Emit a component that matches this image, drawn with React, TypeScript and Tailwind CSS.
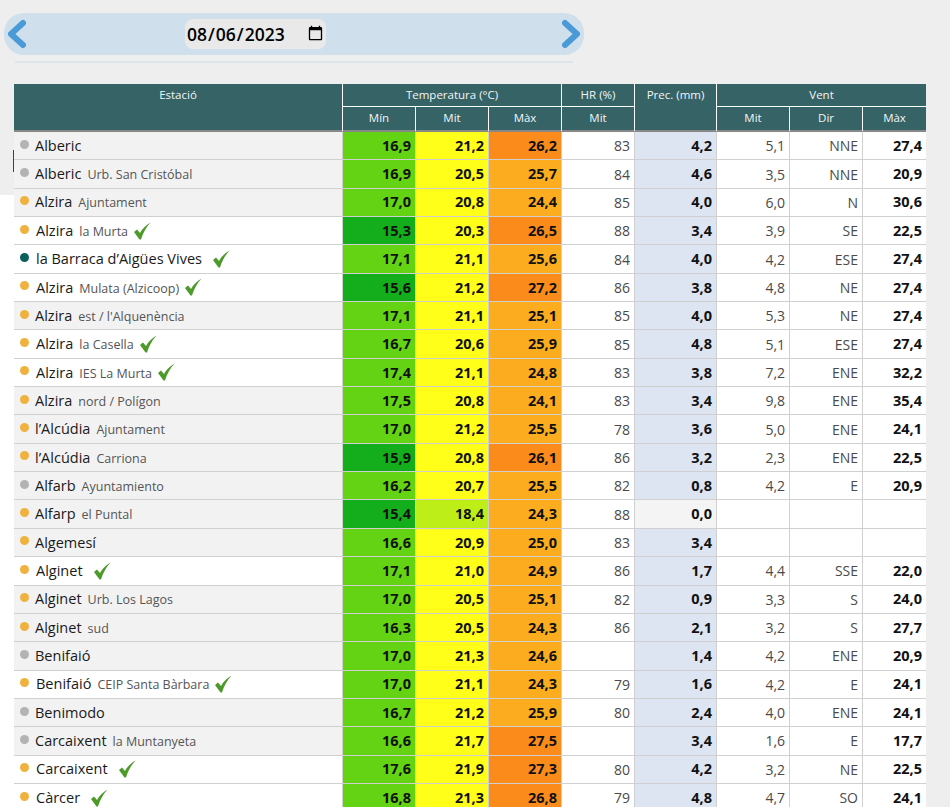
const rows: [string, string, string, boolean, string, string, string, string, string, string, string, string][] = [
  ["Alberic", "", "gray", false, "16,9", "21,2", "26,2", "83", "4,2", "5,1", "NNE", "27,4"],
  ["Alberic", "Urb. San Cristóbal", "gray", false, "16,9", "20,5", "25,7", "84", "4,6", "3,5", "NNE", "20,9"],
  ["Alzira", "Ajuntament", "orange", false, "17,0", "20,8", "24,4", "85", "4,0", "6,0", "N", "30,6"],
  ["Alzira", "la Murta", "orange", true, "15,3", "20,3", "26,5", "88", "3,4", "3,9", "SE", "22,5"],
  ["la Barraca d’Aigües Vives", "", "teal", true, "17,1", "21,1", "25,6", "84", "4,0", "4,2", "ESE", "27,4"],
  ["Alzira", "Mulata (Alzicoop)", "orange", true, "15,6", "21,2", "27,2", "86", "3,8", "4,8", "NE", "27,4"],
  ["Alzira", "est / l'Alquenència", "orange", false, "17,1", "21,1", "25,1", "85", "4,0", "5,3", "NE", "27,4"],
  ["Alzira", "la Casella", "orange", true, "16,7", "20,6", "25,9", "85", "4,8", "5,1", "ESE", "27,4"],
  ["Alzira", "IES La Murta", "orange", true, "17,4", "21,1", "24,8", "83", "3,8", "7,2", "ENE", "32,2"],
  ["Alzira", "nord / Polígon", "orange", false, "17,5", "20,8", "24,1", "83", "3,4", "9,8", "ENE", "35,4"],
  ["l’Alcúdia", "Ajuntament", "orange", false, "17,0", "21,2", "25,5", "78", "3,6", "5,0", "ENE", "24,1"],
  ["l’Alcúdia", "Carriona", "orange", false, "15,9", "20,8", "26,1", "86", "3,2", "2,3", "ENE", "22,5"],
  ["Alfarb", "Ayuntamiento", "gray", false, "16,2", "20,7", "25,5", "82", "0,8", "4,2", "E", "20,9"],
  ["Alfarp", "el Puntal", "orange", false, "15,4", "18,4", "24,3", "88", "0,0", "", "", ""],
  ["Algemesí", "", "orange", false, "16,6", "20,9", "25,0", "83", "3,4", "", "", ""],
  ["Alginet", "", "orange", true, "17,1", "21,0", "24,9", "86", "1,7", "4,4", "SSE", "22,0"],
  ["Alginet", "Urb. Los Lagos", "orange", false, "17,0", "20,5", "25,1", "82", "0,9", "3,3", "S", "24,0"],
  ["Alginet", "sud", "orange", false, "16,3", "20,5", "24,3", "86", "2,1", "3,2", "S", "27,7"],
  ["Benifaió", "", "gray", false, "17,0", "21,3", "24,6", "", "1,4", "4,2", "ENE", "20,9"],
  ["Benifaió", "CEIP Santa Bàrbara", "orange", true, "17,0", "21,1", "24,3", "79", "1,6", "4,2", "E", "24,1"],
  ["Benimodo", "", "gray", false, "16,7", "21,2", "25,9", "80", "2,4", "4,0", "ENE", "24,1"],
  ["Carcaixent", "la Muntanyeta", "gray", false, "16,6", "21,7", "27,5", "", "3,4", "1,6", "E", "17,7"],
  ["Carcaixent", "", "orange", true, "17,6", "21,9", "27,3", "80", "4,2", "3,2", "NE", "22,5"],
  ["Càrcer", "", "orange", true, "16,8", "21,3", "26,8", "79", "4,8", "4,7", "SO", "24,1"],
];

const num = (v: string) => parseFloat(v.replace(",", "."));

const minColor = (v: string) => (num(v) < 16 ? "bg-[#14ae1c]" : "bg-[#63d314]");
const midColor = (v: string) => (num(v) < 20 ? "bg-[#bdee18]" : "bg-[#ffff1a]");
const maxColor = (v: string) => (num(v) >= 26 ? "bg-[#fb8c1c]" : "bg-[#fbad1f]");

const dotColors: Record<string, string> = {
  gray: "bg-[#b3b3b3]",
  orange: "bg-[#f0b23e]",
  teal: "bg-[#0b5f5c]",
};

const Check = ({ wide }: { wide: boolean }) => (
  <svg viewBox="0 0 18 18" className={`h-[18px] w-[18px] shrink-0 ${wide ? "ml-[10px]" : "ml-[5px]"}`}>
    <path d="M1 10 L4 7.5 L7 11 C9 7 13 3 17.5 0.5 C13 5.5 10 11 8 17.5 L6.5 17.5 Z" fill="#4c9a2a" />
  </svg>
);

const Chevron = ({ right }: { right?: boolean }) => (
  <svg viewBox="0 0 22 30" className="h-[30px] w-[22px] shrink-0">
    <path
      d={right ? "M5 4 L17 15 L5 26" : "M17 4 L5 15 L17 26"}
      fill="none"
      stroke="#4a9ad8"
      strokeWidth="6"
      strokeLinecap="round"
      strokeLinejoin="round"
    />
  </svg>
);

const thClass = "border-r border-b border-white bg-[#366366] text-[11.5px] font-normal text-[#f1f6f6]";
const tdClass = "border-r border-b border-[#d0d0d0] px-[4px] text-right text-[14px] text-[#4a4a4a]";
const boldClass = "border-r border-b border-[#d0d0d0] px-[4px] text-right text-[14.5px] font-bold text-[#111]";

const App = () => {
  return (
    <div className="h-[807px] overflow-hidden bg-[#eeeeee] font-['Open_Sans',sans-serif]">
      <div className="ml-1 flex h-[55px] items-end">
        <div className="flex h-[42px] w-[580px] items-center rounded-[20px] bg-[#cfe0ec] px-[2px]">
          <Chevron />
          <input
            type="date"
            defaultValue="2023-08-06"
            className="ml-[157px] h-[30px] w-[141px] rounded-lg bg-[#e9e9e9] pl-px text-[17.5px] font-semibold text-black"
          />
          <div className="ml-auto">
            <Chevron right />
          </div>
        </div>
      </div>
      <div className="mt-[6px] ml-[15px] h-[2px] w-[558px] bg-[#dbe5ec]" />

      <div className="mt-[21px] flex">
        {/* left rail, grey down to the third row */}
        <div className="flex w-[14px] shrink-0 flex-col">
          <div className="h-[111px] bg-[#eeeeee] pt-[66px]">
            <div className="ml-auto h-[22px] w-px bg-[#2f4858]" />
          </div>
          <div className="flex-1 bg-white" />
        </div>

        <table className="w-[912px] table-fixed border-separate border-spacing-0">
          <colgroup>
            <col className="w-[329px]" />
            <col className="w-[73px]" />
            <col className="w-[73px]" />
            <col className="w-[73px]" />
            <col className="w-[73px]" />
            <col className="w-[82px]" />
            <col className="w-[73px]" />
            <col className="w-[73px]" />
            <col className="w-[63px]" />
          </colgroup>
          <thead>
            <tr className="h-[23px]">
              <th rowSpan={2} className={`${thClass} border-b-2 border-b-[#888] pb-[24px]`}>Estació</th>
              <th colSpan={3} className={thClass}>Temperatura (°C)</th>
              <th className={thClass}>HR (%)</th>
              <th rowSpan={2} className={`${thClass} border-b-2 border-b-[#888] pb-[24px]`}>Prec. (mm)</th>
              <th colSpan={3} className={`${thClass} border-r-0`}>Vent</th>
            </tr>
            <tr className="h-[25px]">
              {["Mín", "Mit", "Màx", "Mit"].map((label, i) => (
                <th key={i} className={`${thClass} border-b-2 border-b-[#888] pb-[2px]`}>{label}</th>
              ))}
              {["Mit", "Dir", "Màx"].map((label, i) => (
                <th key={i} className={`${thClass} border-b-2 border-b-[#888] pb-[2px] ${i === 2 ? "border-r-0" : ""}`}>{label}</th>
              ))}
            </tr>
          </thead>
          <tbody>
            {rows.map((r, i) => (
              <tr key={i} className="h-[28.35px]">
                <td className={`border-r border-b border-[#d0d0d0] p-0 ${r[3] ? "bg-white" : "bg-[#f2f2f2]"}`}>
                  <div className="flex items-center pl-[6px]">
                    <span className={`mb-[3px] h-[9px] w-[9px] shrink-0 rounded-full ${dotColors[r[2]]}`} />
                    <div className={`flex items-baseline whitespace-nowrap ${r[3] ? "ml-[7px]" : "ml-[6px]"}`}>
                      <span className="text-[14.5px] text-[#1a1a1a]">{r[0]}</span>
                      {r[1] && <span className="ml-[6px] text-[12.5px] text-[#555]">{r[1]}</span>}
                    </div>
                    {r[3] && <Check wide={!r[1]} />}
                  </div>
                </td>
                <td className={`${boldClass} ${minColor(r[4])}`}>{r[4]}</td>
                <td className={`${boldClass} ${midColor(r[5])}`}>{r[5]}</td>
                <td className={`${boldClass} ${maxColor(r[6])}`}>{r[6]}</td>
                <td className={`${tdClass} bg-white`}>{r[7]}</td>
                <td className={`${boldClass} ${r[8] === "0,0" ? "bg-[#f4f4f4]" : "bg-[#dde4f2]"}`}>{r[8]}</td>
                <td className={`${tdClass} bg-white`}>{r[9]}</td>
                <td className={`${tdClass} bg-white`}>{r[10]}</td>
                <td className={`${boldClass} border-r-0 bg-white`}>{r[11]}</td>
              </tr>
            ))}
          </tbody>
        </table>
      </div>
    </div>
  );
};

export default App;
